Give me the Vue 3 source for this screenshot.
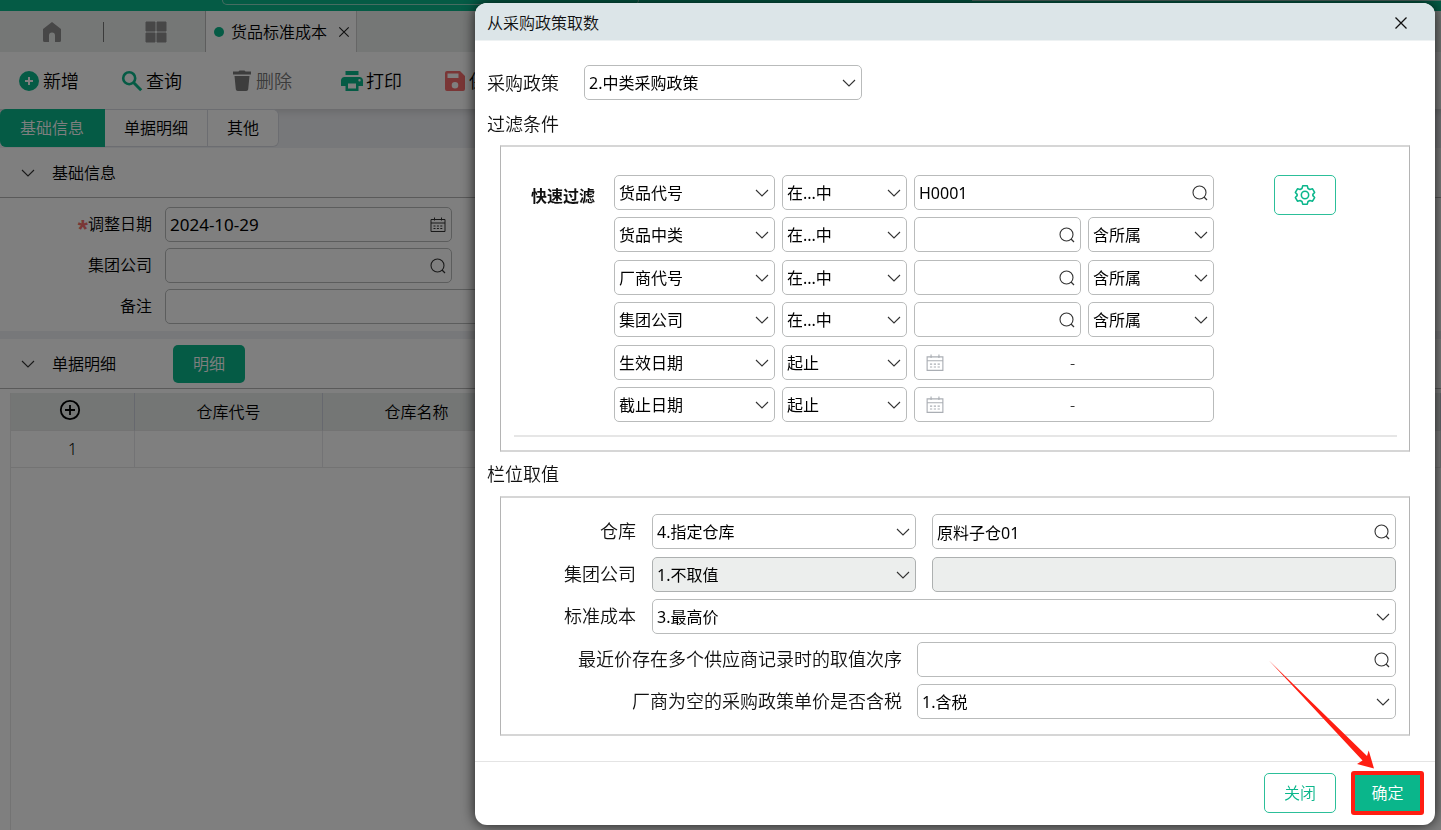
<template>
  <div class="page">
    <svg class="symbols" aria-hidden="true">
      <symbol id="chevron" viewBox="0 0 14 14">
        <path d="M1 4l6 6 6-6" fill="none" stroke="currentColor" stroke-width="1.1" />
      </symbol>
      <symbol id="search" viewBox="0 0 16 16">
        <circle cx="7.5" cy="7.500" r="6.500" fill="none" stroke="currentColor" stroke-width="1.1" />
        <path d="M12 12l3 3" fill="none" stroke="currentColor" stroke-width="1.2" />
      </symbol>
      <symbol id="calendar" viewBox="0 0 16 16">
        <path d="M1 2.5h14v12H1zM1 6h14M4.5 .5v3M11.5 .5v3" fill="none" stroke="currentColor" stroke-width="1" />
        <path d="M3.5 9h9M3.5 11.5h9" fill="none" stroke="currentColor" stroke-width="1" stroke-dasharray="2 1.4" />
      </symbol>
      <symbol id="close" viewBox="0 0 14 14">
        <path d="M1.5 1.5l11 11M12.5 1.5l-11 11" fill="none" stroke="currentColor" stroke-width="1.3" />
      </symbol>
      <symbol id="add" viewBox="0 0 24 24">
        <path d="M12 2a10 10 0 1 0 0 20 10 10 0 0 0 0-20zm4 11h-3v3h-2v-3H8v-2h3V8h2v3h3z" fill="currentColor" />
      </symbol>
      <symbol id="query" viewBox="0 0 24 24">
        <circle cx="9.2" cy="9.2" r="6" fill="none" stroke="currentColor" stroke-width="2.6" />
        <path d="M13.5 13.5l7.700 7.700" fill="none" stroke="currentColor" stroke-width="3" />
      </symbol>
      <symbol id="trash" viewBox="0 0 24 24">
        <path d="M3 2.500h5.500L9.500 1.500h5l1 1H21v3H3zM4.500 7h15l-1.300 13.200a2 2 0 0 1-2 1.800H7.800a2 2 0 0 1-2-1.800z" fill="currentColor" />
      </symbol>
      <symbol id="print" viewBox="0 0 24 24">
        <path d="M19 8H5a3.5 3.5 0 0 0-4 3.5V17h4.5v5h13v-5H23v-5.500A3.500 3.500 0 0 0 19 8zm-3 11.500H8V14.500h8zm3.500-7a1.200 1.200 0 1 1 0-2.400 1.200 1.200 0 0 1 0 2.400zM18.500 2h-13v4h13z" fill="currentColor" />
      </symbol>
      <symbol id="save" viewBox="0 0 24 24">
        <path d="M17 2H4a2 2 0 0 0-2 2v16a2 2 0 0 0 2 2h16a2 2 0 0 0 2-2V7zM12 19.500a3.300 3.300 0 1 1 0-6.600 3.300 3.300 0 0 1 0 6.600zM15.500 9H4.500V4.500h11z" fill="currentColor" />
      </symbol>
      <symbol id="gear" viewBox="0 0 24 24">
        <path
          d="M9.500 2h5l.8 2.900 2 1.100 2.900-.8 2.300 4-1.900 2.100v1.400l1.900 2.100-2.300 4-2.900-.8-2 1.100-.8 2.900h-5l-.8-2.900-2-1.100-2.900.8-2.300-4 1.900-2.100v-1.400L1.500 9.200l2.300-4 2.900.8 2-1.100z"
          fill="none" stroke="currentColor" stroke-width="1.700" stroke-linejoin="round"
        />
        <circle cx="12" cy="12" r="4" fill="none" stroke="currentColor" stroke-width="1.700" />
      </symbol>
    </svg>

    <header class="topbar">
      <div class="top-search"></div>
      <div class="top-line"></div>
    </header>

    <nav class="tabbar">
      <button class="tab-icon" aria-label="首页">
        <svg width="20" height="22" viewBox="0 0 20 22"><path d="M10 1L1 8v11.500A1.500 1.500 0 0 0 2.500 21H7v-6.500a3 3 0 0 1 6 0V21h4.500a1.500 1.500 0 0 0 1.500-1.500V8z" fill="#8f8f8f" /></svg>
      </button>
      <span class="tab-divider"></span>
      <button class="tab-icon" aria-label="应用">
        <svg width="22" height="22" viewBox="0 0 22 22"><path d="M1 1h9v9H1zM12 1h9v9h-9zM1 12h9v9H1zM12 12h9v9h-9z" fill="#8f8f8f" stroke="#8f8f8f" stroke-linejoin="round" /></svg>
      </button>
      <div class="tab-current">
        <i class="dot"></i>
        <span>货品标准成本</span>
        <button class="plain" aria-label="关闭标签"><svg width="12" height="12"><use href="#close" /></svg></button>
      </div>
    </nav>

    <div class="toolbar">
      <button v-for="t in tools" :key="t.icon" :class="['tool', t.icon]">
        <svg width="24" height="24"><use :href="'#' + t.icon" /></svg>
        <span>{{ t.text }}</span>
      </button>
    </div>

    <div class="subtabs">
      <button v-for="(s, i) in subtabs" :key="s" :class="['subtab', { active: i === 0 }]">{{ s }}</button>
    </div>

    <section class="block">
      <h2 class="block-head">
        <svg width="14" height="14"><use href="#chevron" /></svg>
        <span>基础信息</span>
      </h2>
      <div class="base-form">
        <div class="base-row">
          <label for="adjust-date"><b class="required">*</b>调整日期</label>
          <div class="field short">
            <input id="adjust-date" v-model="adjustDate" class="date" type="text" />
            <svg class="field-icon" width="16" height="16"><use href="#calendar" /></svg>
          </div>
        </div>
        <div class="base-row">
          <label for="company">集团公司</label>
          <div class="field short">
            <input id="company" type="text" />
            <svg class="field-icon" width="16" height="16"><use href="#search" /></svg>
          </div>
        </div>
        <div class="base-row">
          <label for="remark">备注</label>
          <div class="field"><input id="remark" type="text" /></div>
        </div>
      </div>
    </section>

    <section class="block detail">
      <h2 class="block-head">
        <svg width="14" height="14"><use href="#chevron" /></svg>
        <span>单据明细</span>
        <button class="detail-btn">明细</button>
      </h2>
      <div class="table-wrap">
        <table>
          <thead>
            <tr>
              <th class="col-no">
                <button class="plain" aria-label="新增行">
                  <svg width="22" height="22" viewBox="0 0 22 22"><circle cx="11" cy="11" r="9.200" fill="none" stroke="#000" stroke-width="1.800" /><path d="M6 11h10M11 6v10" stroke="#000" stroke-width="1.800" /></svg>
                </button>
              </th>
              <th class="col">仓库代号</th>
              <th class="col">仓库名称</th>
              <th></th>
            </tr>
          </thead>
          <tbody>
            <tr>
              <td>1</td>
              <td></td>
              <td></td>
              <td></td>
            </tr>
          </tbody>
        </table>
      </div>
    </section>

    <div class="mask">
      <div class="dialog" role="dialog" aria-labelledby="dialog-title">
        <header class="dialog-head">
          <span id="dialog-title">从采购政策取数</span>
          <button class="plain" aria-label="关闭窗口"><svg width="14" height="14"><use href="#close" /></svg></button>
        </header>

        <div class="dialog-body">
          <div class="policy">
            <label for="policy">采购政策</label>
            <div class="field">
              <select id="policy"><option>2.中类采购政策</option></select>
              <svg class="field-icon" width="14" height="14"><use href="#chevron" /></svg>
            </div>
          </div>

          <h3 class="panel-title">过滤条件</h3>
          <div class="panel filter-panel">
            <div class="filter">
              <span class="filter-label">快速过滤</span>
              <div class="filter-grid">
                <template v-for="f in filters" :key="f.name">
                  <div class="field">
                    <select :aria-label="'过滤栏位 ' + f.name"><option>{{ f.name }}</option></select>
                    <svg class="field-icon" width="14" height="14"><use href="#chevron" /></svg>
                  </div>
                  <div class="field">
                    <select :aria-label="f.name + '条件'"><option>{{ f.op }}</option></select>
                    <svg class="field-icon" width="14" height="14"><use href="#chevron" /></svg>
                  </div>
                  <div v-if="f.range" class="field span range">
                    <svg width="18" height="18"><use href="#calendar" /></svg>
                    <input type="text" :aria-label="f.name + '起'" />
                    <span>-</span>
                    <input type="text" :aria-label="f.name + '止'" />
                  </div>
                  <div v-else :class="['field', { span: !f.scope }]">
                    <input v-model="f.value" type="text" :aria-label="f.name + '值'" />
                    <svg class="field-icon" width="16" height="16"><use href="#search" /></svg>
                  </div>
                  <div v-if="f.scope" class="field">
                    <select :aria-label="f.name + '范围'"><option>{{ f.scope }}</option></select>
                    <svg class="field-icon" width="14" height="14"><use href="#chevron" /></svg>
                  </div>
                </template>
              </div>
              <button class="gear-btn" aria-label="设置"><svg width="22" height="22"><use href="#gear" /></svg></button>
            </div>
            <hr />
          </div>

          <h3 class="panel-title">栏位取值</h3>
          <div class="panel value-panel">
            <div class="value-row">
              <label for="warehouse">仓库</label>
              <div class="field mid">
                <select id="warehouse"><option>4.指定仓库</option></select>
                <svg class="field-icon" width="14" height="14"><use href="#chevron" /></svg>
              </div>
              <div class="field">
                <input v-model="warehouse" type="text" aria-label="指定仓库" />
                <svg class="field-icon" width="16" height="16"><use href="#search" /></svg>
              </div>
            </div>
            <div class="value-row">
              <label for="group">集团公司</label>
              <div class="field mid disabled">
                <select id="group" disabled><option>1.不取值</option></select>
                <svg class="field-icon" width="14" height="14"><use href="#chevron" /></svg>
              </div>
              <div class="field disabled"><input type="text" aria-label="指定集团公司" disabled /></div>
            </div>
            <div class="value-row">
              <label for="cost">标准成本</label>
              <div class="field">
                <select id="cost"><option>3.最高价</option></select>
                <svg class="field-icon" width="14" height="14"><use href="#chevron" /></svg>
              </div>
            </div>
            <div class="value-row long">
              <label for="order">最近价存在多个供应商记录时的取值次序</label>
              <div class="field">
                <input id="order" type="text" />
                <svg class="field-icon" width="16" height="16"><use href="#search" /></svg>
              </div>
            </div>
            <div class="value-row long">
              <label for="tax">厂商为空的采购政策单价是否含税</label>
              <div class="field">
                <select id="tax"><option>1.含税</option></select>
                <svg class="field-icon" width="14" height="14"><use href="#chevron" /></svg>
              </div>
            </div>
          </div>
        </div>

        <footer class="dialog-foot">
          <button class="btn">关闭</button>
          <div class="confirm">
            <button class="btn primary">确定</button>
            <svg class="arrow" width="106" height="109" viewBox="0 0 106 109">
              <path d="M0 0.500L98 96l1.700-5.500 5.300 18-17-4.500 5.500-3.500z" fill="#ff1e12" />
            </svg>
          </div>
        </footer>
      </div>
    </div>
  </div>
</template>

<script setup>
import { ref, reactive } from 'vue'

const adjustDate = ref('2024-10-29')
const warehouse = ref('原料子仓01')

const tools = [
  { icon: 'add', text: '新增' },
  { icon: 'query', text: '查询' },
  { icon: 'trash', text: '删除' },
  { icon: 'print', text: '打印' },
  { icon: 'save', text: '保存' }
]

const subtabs = ['基础信息', '单据明细', '其他']

const filters = reactive([
  { name: '货品代号', op: '在...中', value: 'H0001' },
  { name: '货品中类', op: '在...中', value: '', scope: '含所属' },
  { name: '厂商代号', op: '在...中', value: '', scope: '含所属' },
  { name: '集团公司', op: '在...中', value: '', scope: '含所属' },
  { name: '生效日期', op: '起止', range: true },
  { name: '截止日期', op: '起止', range: true }
])
</script>

<style>
body {
  margin: 0;
}
</style>

<style scoped>
* {
  box-sizing: border-box;
}

.page {
  min-height: 100vh;
  display: flex;
  flex-direction: column;
  overflow: hidden;
  background: #fff;
  color: #000;
  font-family: "Noto Sans", "Noto Sans CJK SC", sans-serif;
  font-size: 16px;
  font-weight: 350;
  line-height: 24px;
}

.symbols {
  position: absolute;
  width: 0;
  height: 0;
}

button,
input,
select {
  font: inherit;
  color: inherit;
}

button {
  padding: 0;
  border: none;
  background: none;
  cursor: pointer;
}

svg {
  display: block;
  flex-shrink: 0;
}

h2,
h3 {
  margin: 0;
  font-size: 16px;
  font-weight: inherit;
}

.topbar {
  display: flex;
  height: 11px;
  background: #0ab68b;
}

.top-search {
  width: 417px;
  height: 5px;
  margin-left: 222px;
  border: 1px solid #8fd9c4;
  border-top: none;
  border-radius: 0 0 8px 8px;
}

.top-line {
  flex: 1;
  height: 1px;
  margin-left: 333px;
  background: #a8d8cc;
}

.tabbar {
  display: flex;
  align-items: center;
  height: 41px;
  background: #ebefed;
}

.tab-icon {
  display: flex;
  justify-content: center;
  width: 103px;
}

.tab-divider {
  width: 1px;
  height: 20px;
  background: #777;
}

.tab-current {
  display: flex;
  align-items: center;
  align-self: stretch;
  gap: 7px;
  width: 152px;
  margin-left: -2px;
  padding-left: 8px;
  border-left: 1px solid #bbb;
  border-right: 1px solid #ccc;
  background: #fff;
}

.tab-current .plain {
  margin-left: 4px;
  color: #222;
}

.dot {
  width: 10px;
  height: 10px;
  border-radius: 50%;
  background: #0ab68b;
}

.toolbar {
  display: flex;
  align-items: center;
  gap: 41px;
  height: 57px;
  padding-left: 17px;
  font-size: 18px;
}

.tool {
  display: flex;
  align-items: center;
  gap: 2px;
}

.tool svg {
  color: #0ab68b;
}

.tool.query,
.tool.trash {
  margin-right: 7px;
}

.tool.trash {
  color: #777;
}

.tool.trash svg {
  color: #7a7a7a;
}

.tool.save svg {
  color: #f56c6c;
}

.subtabs {
  display: flex;
  height: 39px;
  padding-bottom: 1px;
  background: #eff0f4;
  box-shadow: inset 0 8px 8px -6px rgba(0, 0, 0, 0.15);
}

.subtab {
  padding: 0 19px;
  border: 1px solid #d8dbe2;
  border-left: none;
  background: #fff;
}

.subtab:first-child {
  border-radius: 6px 0 0 6px;
}

.subtab:last-child {
  border-radius: 0 6px 6px 0;
}

.subtab.active {
  padding: 0 20px;
  border-color: #0ab68b;
  background: #0ab68b;
  color: #fff;
}

.block-head {
  display: flex;
  align-items: center;
  height: 50px;
  padding-left: 21px;
  border-bottom: 1px solid #b4b4b4;
}

.block-head svg {
  color: #333;
}

.block-head span {
  margin-left: 17px;
}

.base-form {
  display: flex;
  flex-direction: column;
  gap: 6px;
  padding: 9px 14px 7px 0;
  border-bottom: 8px solid #eff0f4;
}

.base-row {
  display: flex;
  align-items: center;
  gap: 13px;
}

.base-row label {
  width: 152px;
  padding-bottom: 1px;
  text-align: right;
}

.required {
  color: #f56c6c;
  font-family: "Liberation Sans", sans-serif;
  font-size: 26px;
  line-height: 16px;
  vertical-align: -8px;
}

.field {
  position: relative;
  display: flex;
  align-items: center;
  flex: 1;
  min-width: 0;
  height: 35px;
  border: 1px solid #b9bbbb;
  border-radius: 5px;
  background: #fff;
}

.field.short {
  flex: 0 0 287px;
}

.field input,
.field select {
  flex: 1;
  width: 100%;
  min-width: 0;
  height: 100%;
  padding: 0 4px;
  border: none;
  outline: none;
  background: none;
  appearance: none;
  font-weight: 400;
  color: #000;
  opacity: 1;
}

.field input.date {
  font-size: 17px;
}

.field-icon {
  position: absolute;
  right: 5px;
  color: #333;
  pointer-events: none;
}

.field.disabled {
  background: #eceeed;
  border-color: #adb0b0;
}

.detail {
  display: flex;
  flex-direction: column;
  flex: 1;
}

.detail-btn {
  width: 72px;
  height: 38px;
  margin-left: 57px;
  border-radius: 5px;
  background: #0ab68b;
  color: #fff;
}

.table-wrap {
  flex: 1;
  margin: 4px 0 0 10px;
  border-left: 1px solid #e6e6e6;
}

table {
  width: 100%;
  border-spacing: 0;
  table-layout: fixed;
}

th,
td {
  height: 37px;
  padding: 0;
  border-right: 1px solid #e6e6ea;
  border-bottom: 1px solid #e6e6e6;
  font-weight: inherit;
  text-align: center;
}

th {
  height: 38px;
  background: #e8eceb;
  border-right-color: #ccd0dc;
}

.col-no {
  width: 124px;
  padding: 0 6px 6px 0;
}

.col {
  width: 188px;
}

th .plain {
  display: inline-block;
  vertical-align: middle;
}

.mask {
  position: fixed;
  inset: 0;
  display: flex;
  justify-content: flex-end;
  padding: 3px 6px 5px;
  background: rgba(0, 0, 0, 0.5);
}

.dialog {
  display: flex;
  flex-direction: column;
  width: 100%;
  max-width: 960px;
  overflow: auto;
  border-radius: 12px;
  background: #fff;
  color: #111;
  box-shadow: 0 0 14px rgba(0, 0, 0, 0.8);
}

.dialog-head {
  display: flex;
  align-items: center;
  justify-content: space-between;
  flex-shrink: 0;
  height: 38px;
  padding: 2px 27px 0 12px;
  border-bottom: 1px solid #eef2f3;
  background: #dce5e8;
}

.dialog-body {
  flex: 1;
  padding: 24px 25px 0;
}

.policy {
  display: flex;
  align-items: center;
  gap: 25px;
  margin-left: -13px;
  margin-bottom: 4px;
  font-size: 18px;
}

.policy .field {
  flex: 0 1 278px;
  font-size: 16px;
}

.panel-title {
  margin-left: -13px;
  font-size: 18px;
  line-height: 44px;
}

.policy + .panel-title {
  line-height: 41px;
}

.panel {
  border: 1px solid #b4b4b4;
  border-top: 2px solid #d6d6d6;
  border-bottom: 2px solid #d6d6d6;
}

.filter-panel {
  padding: 28px 12px 13px 13px;
}

.filter {
  display: flex;
  align-items: flex-start;
}

.filter-label {
  width: 100px;
  padding: 9px 0 0 17px;
  font-weight: 700;
}

.filter-grid {
  display: grid;
  grid-template-columns: 161px 125px 167px 126px;
  grid-auto-rows: 42px 43px;
  column-gap: 7px;
}

.field.span {
  grid-column: span 2;
}

.range {
  padding-right: 12px;
}

.range > svg {
  margin-left: 11px;
  color: #aaaeb4;
}

.range input {
  text-align: center;
}

.gear-btn {
  display: flex;
  align-items: center;
  justify-content: center;
  width: 62px;
  height: 40px;
  margin-left: 60px;
  border: 1px solid #2cbf99;
  border-radius: 5px;
  color: #0ab68b;
}

hr {
  height: 2px;
  margin: 5px 0 0;
  border: none;
  background: #e6e6e6;
}

.value-panel {
  display: grid;
  grid-auto-rows: 43px 42px;
  padding: 16px 13px 7px;
}

.value-row {
  display: flex;
  align-items: flex-start;
  gap: 16px;
}

.value-row label {
  flex: 0 0 122px;
  font-size: 18px;
  line-height: 35px;
  text-align: right;
}

.value-row.long label {
  flex-basis: 388px;
}

.value-row.long {
  gap: 15px;
}

.value-row .mid {
  flex: 0 0 264px;
}

.dialog-foot {
  display: flex;
  align-items: center;
  justify-content: flex-end;
  flex-shrink: 0;
  gap: 15px;
  height: 64px;
  padding: 0 11px 1px 0;
  border-top: 1px solid #e4e4e4;
}

.btn {
  width: 72px;
  height: 40px;
  border: 1px solid #2cbf99;
  border-radius: 5px;
  background: #fff;
  color: #0ab68b;
}

.btn.primary {
  width: 73px;
  background: #0ab68b;
  color: #fff;
}

.confirm {
  position: relative;
  display: flex;
}

.confirm::after {
  content: "";
  position: absolute;
  inset: -2px 0;
  border: 4px solid #ff1e12;
  border-radius: 3px;
  pointer-events: none;
}

.arrow {
  position: absolute;
  right: 49px;
  bottom: 44px;
  pointer-events: none;
}
</style>
